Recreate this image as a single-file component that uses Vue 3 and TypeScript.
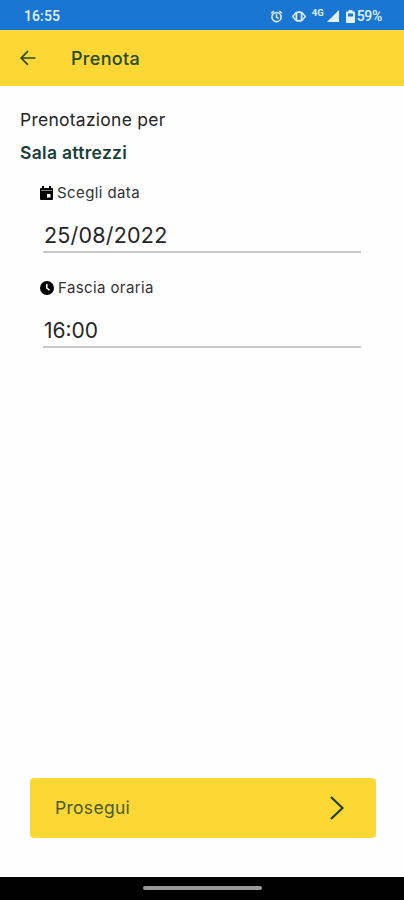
<script setup lang="ts">
import { ref } from 'vue'

interface Field {
  id: string
  label: string
  value: string
  icon: 'calendar' | 'clock'
}

const venue = ref('Sala attrezzi')
const fields = ref<Field[]>([
  { id: 'date', label: 'Scegli data', value: '25/08/2022', icon: 'calendar' },
  { id: 'slot', label: 'Fascia oraria', value: '16:00', icon: 'clock' },
])
</script>

<template>
  <div class="screen">
    <div class="status">
      <span class="time">16:55</span>
      <div class="indicators">
        <svg class="alarm" viewBox="0 0 24 24" fill="none" stroke="currentColor" stroke-width="2.8">
          <circle cx="12" cy="13" r="8.5" />
          <path d="M12 8v5.5l4 2M2 6l5-4M22 6l-5-4" />
        </svg>
        <svg class="vibrate" viewBox="0 0 16 12">
          <path d="M5 1 0.8 6 5 11M11 1l4.200 5L11 11" fill="none" stroke="currentColor" stroke-width="1.600" />
          <rect x="5" y="1" width="6" height="10" rx="2" fill="none" stroke="currentColor" stroke-width="2" />
        </svg>
        <span class="network">4G</span>
        <svg class="signal" viewBox="0 0 12 12"><path d="M12 0v12H0z" fill="currentColor" /></svg>
        <svg class="battery" viewBox="0 0 9 13">
          <path fill="currentColor" fill-rule="evenodd" d="M2.500 0h4v1.500H8q1 0 1 1V12q0 1-1 1H1q-1 0-1-1V2.500q0-1 1-1h1.500zM2 3.500v3h5v-3z" />
        </svg>
        <span class="charge">59%</span>
      </div>
    </div>

    <header class="bar">
      <svg class="back" viewBox="0 0 16 16" fill="none" stroke="currentColor" stroke-width="1.700">
        <path d="M15.500 8H1.500M8 1.200 1.200 8 8 14.800" />
      </svg>
      <h1 class="title">Prenota</h1>
    </header>

    <main class="content">
      <p class="intro">Prenotazione per</p>
      <p class="venue">{{ venue }}</p>
      <div v-for="field in fields" :key="field.id" class="field">
        <div class="label" :class="field.icon">
          <svg v-if="field.icon === 'calendar'" class="icon" viewBox="0 0 13 14">
            <path fill="currentColor" fill-rule="evenodd" d="M2 0h2v2h5V0h2v2h1q1 0 1 1v10q0 1-1 1H1q-1 0-1-1V3q0-1 1-1h1zM1 4.500v.5h11v-.5zM7 8v3.500h3.500V8z" />
          </svg>
          <svg v-else class="icon" viewBox="0 0 14 14">
            <circle cx="7" cy="7" r="7" fill="currentColor" />
            <path d="M6.800 3v4.200l2.700 2" fill="none" stroke="#fff" stroke-width="1.500" />
          </svg>
          <span>{{ field.label }}</span>
        </div>
        <div class="value"><span>{{ field.value }}</span></div>
      </div>
    </main>

    <button class="proceed" type="button">
      <span>Prosegui</span>
      <svg class="chevron" viewBox="0 0 14 24" fill="none" stroke="currentColor" stroke-width="2.2">
        <path d="M1 1l11.500 11L1 23" />
      </svg>
    </button>
    <div class="nav"><div class="handle"></div></div>
  </div>
</template>

<style>
body {
  background: #fefefe;
}
</style>

<style scoped>
.screen {
  display: flex;
  flex-direction: column;
  width: 404px;
  height: 900px;
  overflow: hidden;
  background: #fefefe;
  color: #252525;
  font-family: Inter, sans-serif;
}
svg {
  display: block;
  flex: none;
}
h1, p {
  margin: 0;
}
.status {
  display: flex;
  flex: none;
  align-items: center;
  justify-content: space-between;
  box-sizing: border-box;
  height: 30px;
  padding: 2px 22px 0 24px;
  background: #1976d2;
  color: #e4f1fc;
  font: 500 14px/16px Roboto, sans-serif;
}
.time {
  letter-spacing: 0.1px;
}
.indicators {
  display: flex;
  align-items: center;
}
.alarm {
  width: 13px;
  height: 13px;
}
.vibrate {
  width: 14px;
  height: 11px;
  margin-left: 9px;
}
.network {
  margin: -6px 3px 0 6px;
  font-size: 9.5px;
  font-weight: 700;
  line-height: 10px;
}
.signal {
  width: 12px;
  height: 12px;
}
.battery {
  width: 9px;
  height: 13px;
  margin: 0 2px 0 7px;
}
.charge {
  letter-spacing: -0.3px;
}
.bar {
  display: flex;
  flex: none;
  align-items: center;
  box-sizing: border-box;
  height: 56px;
  padding: 2px 20px 0;
  background: #fdd835;
  color: #26492c;
}
.back {
  width: 16px;
  height: 16px;
  margin-top: -3px;
}
.title {
  margin-left: 35px;
  font-size: 18px;
  font-weight: 500;
  line-height: 24px;
  letter-spacing: 0.3px;
}
.content {
  flex: 1;
  padding: 21px 20px 0;
}
.intro {
  font-size: 17.5px;
  line-height: 26px;
  letter-spacing: 0.25px;
}
.venue {
  margin-top: 7px;
  color: #183f38;
  font-size: 17.5px;
  font-weight: 600;
  line-height: 26px;
  letter-spacing: 0.3px;
}
.field {
  box-sizing: border-box;
  height: 95px;
  padding: 14px 23px 0 20px;
}
.label {
  display: flex;
  align-items: center;
  gap: 4px;
  height: 24px;
  font-size: 15px;
  letter-spacing: 0.4px;
  color: #333;
}
.icon {
  width: 13px;
  height: 14px;
  margin-top: 1px;
  color: #000;
}
.clock .icon {
  width: 14px;
}
.value {
  box-sizing: border-box;
  height: 49px;
  margin-left: 3px;
  padding: 17px 0 0 1px;
  border-bottom: 2px solid #c8c8c8;
  font-size: 21.5px;
  line-height: 28px;
  letter-spacing: 0.2px;
}
.clock + .value {
  padding-top: 18px;
  font-size: 21px;
  letter-spacing: 0;
}
.proceed {
  display: flex;
  flex: none;
  align-items: center;
  justify-content: space-between;
  width: 346px;
  height: 60px;
  margin: 0 0 39px 30px;
  padding: 0 32px 0 25px;
  border: 0;
  border-radius: 4px;
  background: #fdd835;
  color: #4a5a2e;
  font-family: inherit;
  font-size: 17.5px;
  letter-spacing: 0.3px;
}
.proceed span {
  margin-top: -1px;
}
.chevron {
  width: 14px;
  height: 24px;
  color: #1d4030;
}
.nav {
  display: flex;
  flex: none;
  justify-content: center;
  height: 23px;
  background: #000;
}
.handle {
  width: 119px;
  height: 4px;
  margin-top: 9px;
  border-radius: 2px;
  background: #999;
}
</style>
